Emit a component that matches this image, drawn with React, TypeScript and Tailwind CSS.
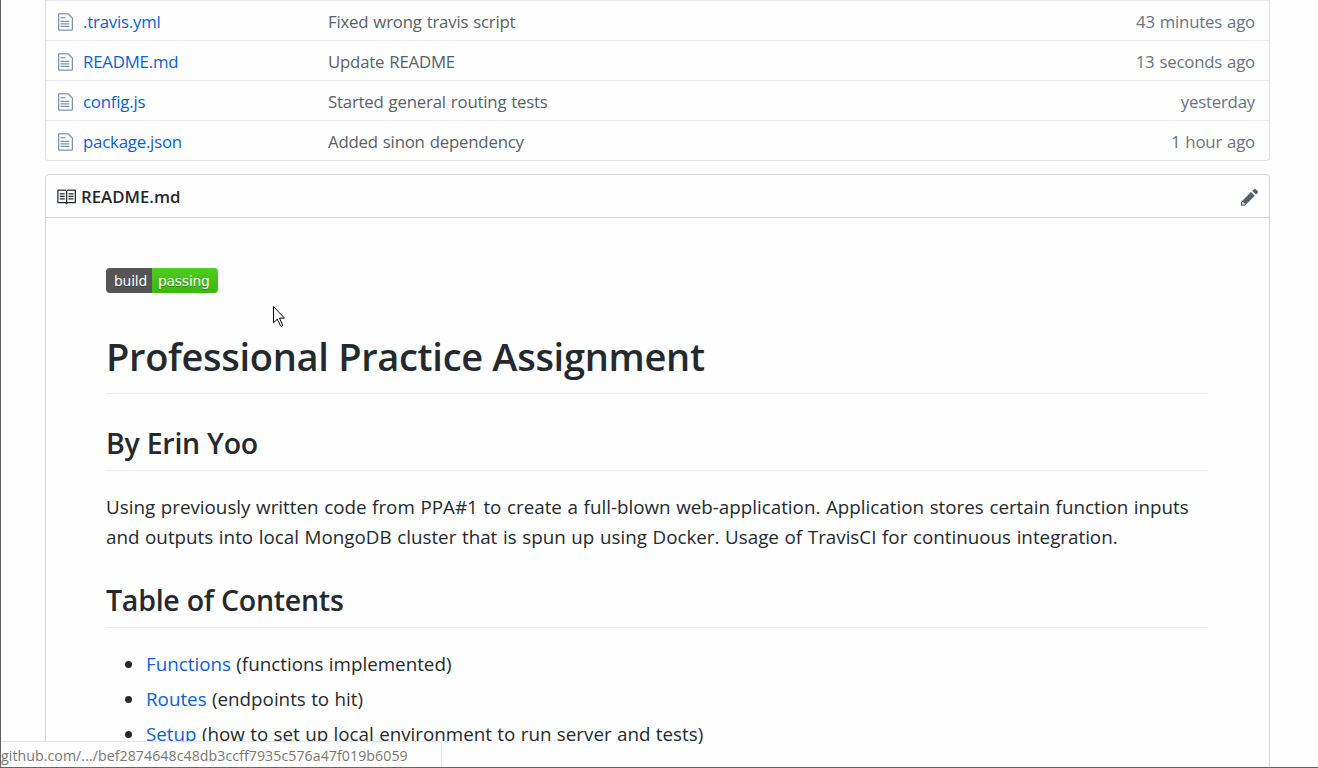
import type { ReactNode } from "react";

type FileRow = { name: string; message: string; age: string };

const files: FileRow[] = [
  { name: ".travis.yml", message: "Fixed wrong travis script", age: "43 minutes ago" },
  { name: "README.md", message: "Update README", age: "13 seconds ago" },
  { name: "config.js", message: "Started general routing tests", age: "yesterday" },
  { name: "package.json", message: "Added sinon dependency", age: "1 hour ago" },
];

const contents = [
  { link: "Functions", note: "(functions implemented)" },
  { link: "Routes", note: "(endpoints to hit)" },
  { link: "Setup", note: "(how to set up local environment to run server and tests)" },
];

function FileIcon() {
  return (
    <svg className="block h-5 w-[15px] shrink-0 fill-[#7b93b2]" viewBox="0 0 12 16">
      <path d="M6 5H2V4h4v1zM2 8h7V7H2v1zm0 2h7V9H2v1zm0 2h7v-1H2v1zm10-7.5V14c0 .55-.45 1-1 1H1c-.55 0-1-.45-1-1V2c0-.55.45-1 1-1h7.5L12 4.5zM11 5L8 2H1v12h10V5z" />
    </svg>
  );
}

function BookIcon() {
  return (
    <svg className="block size-5 shrink-0 fill-[#24292e]" viewBox="0 0 16 16">
      <path d="M3 5h4v1H3V5zm0 3h4V7H3v1zm0 2h4V9H3v1zm11-5h-4v1h4V5zm0 2h-4v1h4V7zm0 2h-4v1h4V9zm2-6v9c0 .55-.45 1-1 1H9.5l-1 1-1-1H2c-.55 0-1-.45-1-1V3c0-.55.45-1 1-1h5.5l1 1 1-1H15c.55 0 1 .45 1 1zm-8 .5L7.5 3H2v9h6V3.5zm7-.5H9.5l-.5.5V12h6V3z" />
    </svg>
  );
}

function PencilIcon() {
  return (
    <svg className="block h-5 w-[17.5px] shrink-0 fill-[#586069]" viewBox="0 0 14 16">
      <path d="M0 12v3h3l8-8-3-3-8 8zm3 2H1v-2h1v1h1v1zm10.3-9.3L12 6 9 3l1.3-1.3a.996.996 0 0 1 1.41 0l1.59 1.59c.39.39.39 1.02 0 1.41z" />
    </svg>
  );
}

function Cursor() {
  return (
    <svg className="absolute left-[272px] top-[306px] h-[21px] w-3" viewBox="0 0 12 21">
      <path
        d="M.5.5v16.2l3.8-3.6 3.2 6.8c.8.8 2.2.2 2-.9l-3-6.9h5z"
        fill="#fff"
        stroke="#000"
        strokeWidth="1"
      />
    </svg>
  );
}

function SectionHeading({ children }: { children: ReactNode }) {
  return (
    <h2 className="h-[47px] border-b border-[#eaecef] text-[28.5px] leading-[38px] font-semibold tracking-[-0.25px]">
      {children}
    </h2>
  );
}

export default function App() {
  return (
    <div className="relative h-[768px] w-[1318px] overflow-hidden border-b border-l border-[#666] bg-[#fefefe] pr-12 pl-11 font-['Open_Sans',sans-serif] text-[#24292e]">
      <div className="h-[161px] rounded-b-[4px] border-x border-b border-[#dfe2e5]">
        {files.map((file) => (
          <div
            key={file.name}
            className="flex h-10 items-center border-t border-[#eaecef] pt-[2px] pr-[14px] pl-3 text-[16.8px] tracking-[-0.2px] text-[#586069] [word-spacing:0.8px]"
          >
            <FileIcon />
            <a className="ml-[10px] w-[245px] text-[#0d5fd6]">{file.name}</a>
            <span className="flex-1">{file.message}</span>
            <span className="text-[#6a737d]">{file.age}</span>
          </div>
        ))}
      </div>

      <div className="mt-[13px] h-[620px] rounded-t-[4px] border border-[#d1d5da]">
        <div className="flex h-[43px] items-center border-b border-[#d1d5da] pt-px pr-[11px] pl-[10px]">
          <BookIcon />
          <span className="ml-[5px] flex-1 pt-px text-[16.8px] font-semibold">README.md</span>
          <PencilIcon />
        </div>

        <article className="pt-[50px] pr-[61px] pl-[60px]">
          <div className="flex h-[25px] w-28 overflow-hidden rounded-[4px] font-['DejaVu_Sans',sans-serif] text-[13.75px] leading-[26px] tracking-[-0.15px] text-white [text-shadow:0_1px_0_rgba(1,1,1,0.3)]">
            <span className="w-[46px] bg-[#555] pl-2">build</span>
            <span className="flex-1 bg-linear-to-b from-[#4fcb21] to-[#3eb60e] pl-[6px]">passing</span>
          </div>

          <h1 className="mt-10 h-[61px] border-b border-[#eaecef] text-[38px] leading-[47px] font-semibold tracking-[-0.3px]">
            Professional Practice Assignment
          </h1>

          <div className="mt-[30px]">
            <SectionHeading>By Erin Yoo</SectionHeading>
          </div>

          <p className="mt-[21px] text-[18.8px] leading-[30px] whitespace-nowrap [word-spacing:0.75px]">
            Using previously written code from PPA#1 to create a full-blown web-application. Application stores certain function inputs
            <br />
            and outputs into local MongoDB cluster that is spun up using Docker. Usage of TravisCI for continuous integration.
          </p>

          <div className="mt-[29px]">
            <SectionHeading>Table of Contents</SectionHeading>
          </div>

          <ul className="mt-[21px] flex flex-col gap-[5px] text-[18.8px] leading-[30px] whitespace-nowrap [word-spacing:0.5px]">
            {contents.map((item) => (
              <li key={item.link} className="flex items-center pl-[19px]">
                <span className="mr-[14px] size-[7px] rounded-full bg-[#24292e]" />
                <span>
                  <a className="text-[#0d5fd6]">{item.link}</a> {item.note}
                </span>
              </li>
            ))}
          </ul>
        </article>
      </div>

      <Cursor />

      <div className="absolute bottom-0 left-0 h-[26px] w-[441px] rounded-tr-[4px] border-t border-r border-[#e5e5e5] bg-[#fefefe] text-[14.2px] leading-[27px] tracking-[0.05px] whitespace-nowrap text-[#777]">
        github.com/.../bef2874648c48db3ccff7935c576a47f019b6059
      </div>
    </div>
  );
}
